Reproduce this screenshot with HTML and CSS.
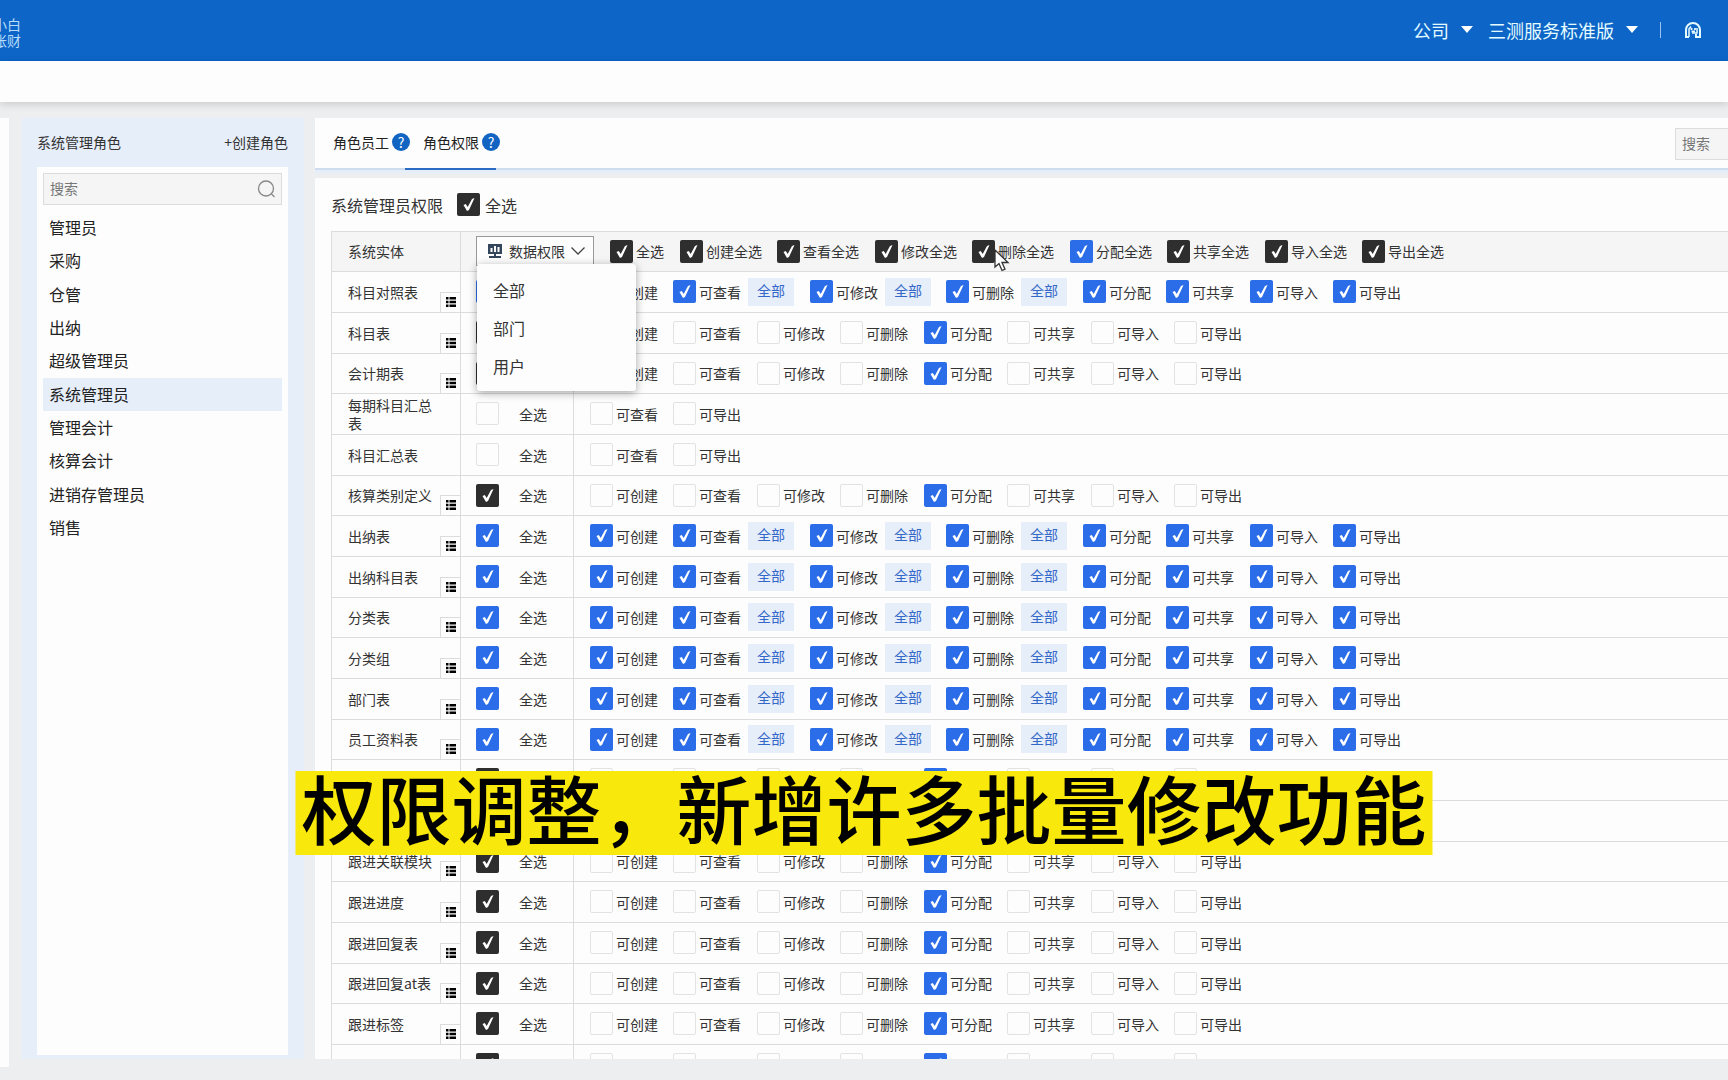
FILE: index.html
```html
<!DOCTYPE html>
<html lang="zh-CN">
<head>
<meta charset="utf-8">
<title>角色权限</title>
<link rel="stylesheet" href="styles.css">
</head>
<body>
<header class="topbar">
  <div class="logo">小白<br>账财</div>
  <nav class="account">
    <button class="account-menu" type="button">公司<span class="caret"></span></button>
    <button class="account-menu" type="button">三测服务标准版<span class="caret"></span></button>
    <span class="divider"></span>
    <button class="ghost" type="button" aria-label="助手">
      <svg width="18" height="18" viewBox="0 0 18 18" fill="none" stroke="#e4fbff"><path stroke-width="2" d="M5 16H2V9a7 7 0 0 1 14 0v7h-4v-3"/><path stroke-width="1.500" d="M5 16V8l2-2.500M13 7v5H8"/><path stroke-width="1.800" d="M7.500 7v2M11 7v2M7.500 10.500H11"/></svg>
    </button>
  </nav>
</header>
<div class="subbar"></div>
<div class="workspace">
  <div class="strip"></div>
  <aside class="sidebar">
    <div class="sidebar-head"><span>系统管理角色</span><a href="#">+创建角色</a></div>
    <div class="sidebar-body">
      <div class="search">
        <input type="text" placeholder="搜索" aria-label="搜索角色">
        <svg width="20" height="20" viewBox="0 0 20 20" fill="none" stroke="#888" stroke-width="1.3"><circle cx="10" cy="9.500" r="7.5"/><path d="M15.500 15l3 3"/></svg>
      </div>
      <ul class="roles">
        <li><a href="#">管理员</a></li>
        <li><a href="#">采购</a></li>
        <li><a href="#">仓管</a></li>
        <li><a href="#">出纳</a></li>
        <li><a href="#">超级管理员</a></li>
        <li class="active"><a href="#">系统管理员</a></li>
        <li><a href="#">管理会计</a></li>
        <li><a href="#">核算会计</a></li>
        <li><a href="#">进销存管理员</a></li>
        <li><a href="#">销售</a></li>
      </ul>
    </div>
  </aside>
  <main class="main">
    <div class="tabs">
      <a class="tab" href="#">角色员工<span class="help">?</span></a>
      <a class="tab current" href="#">角色权限<span class="help">?</span></a>
      <div class="tab-search"><input type="text" placeholder="搜索" aria-label="搜索权限"></div>
    </div>
    <section class="panel">
      <div class="panel-head">
        <h1>系统管理员权限</h1>
        <label class="check large"><input class="dark" type="checkbox" checked>全选</label>
      </div>
      <table class="grid">
        <colgroup><col class="col-name"><col class="col-all"><col></colgroup>
        <thead>
          <tr>
            <th scope="col">系统实体</th>
            <th scope="col" colspan="2">
              <div class="bulk">
                <div class="scope">
                  <button class="scope-button" type="button">
                    <svg width="16" height="14" viewBox="0 0 16 14"><path fill="#34465c" d="M1 0h14v10H1z"/><path stroke="#fff" stroke-width="2" d="M4.500 4v4M8 2v6M11.500 3v5"/><path fill="#34465c" d="M7 10h2v2h5v2H2v-2h5z"/></svg>
                    数据权限
                    <svg width="14" height="8" viewBox="0 0 14 8" fill="none" stroke="#444" stroke-width="1.3"><path d="M.5.500L7 7l6.500-6.500"/></svg>
                  </button>
                  <ul class="scope-menu"><li>全部</li><li>部门</li><li>用户</li></ul>
                </div>
                <label class="check"><input class="dark" type="checkbox" checked>全选</label>
                <div class="checks">
                  <label class="check"><input class="dark" type="checkbox" checked>创建全选</label>
                  <label class="check"><input class="dark" type="checkbox" checked>查看全选</label>
                  <label class="check"><input class="dark" type="checkbox" checked>修改全选</label>
                  <label class="check hovered"><input class="dark" type="checkbox" checked>删除全选
                    <svg class="cursor" width="16" height="24" viewBox="0 0 16 24"><path fill="#fff" stroke="#333" stroke-width="1.300" d="M1 1v17l4-3.500 3 7 3-1.300-3-6.700h6z"/></svg>
                  </label>
                  <label class="check"><input type="checkbox" checked>分配全选</label>
                  <label class="check"><input class="dark" type="checkbox" checked>共享全选</label>
                  <label class="check"><input class="dark" type="checkbox" checked>导入全选</label>
                  <label class="check"><input class="dark" type="checkbox" checked>导出全选</label>
                </div>
              </div>
            </th>
          </tr>
        </thead>
        <tbody id="rows"></tbody>
      </table>
    </section>
  </main>
</div>
<p class="caption">权限调整，新增许多批量修改功能</p>
<script src="app.js"></script>
</body>
</html>
```
FILE: styles.css
```css
* { box-sizing: border-box; }

body {
  margin: 0;
  height: 100vh;
  overflow: hidden;
  display: flex;
  flex-direction: column;
  background: #eceef0;
  color: #333;
  font: 14px/18px "Noto Sans CJK SC", "Liberation Sans", sans-serif;
}

button, input { font: inherit; color: inherit; }
a { color: inherit; text-decoration: none; }
ul { list-style: none; margin: 0; padding: 0; }

.topbar {
  flex: none;
  height: 61px;
  display: flex;
  align-items: center;
  justify-content: space-between;
  padding: 0 26px 2px 0;
  background: #0c65c7;
  color: #e4fbff;
}
.logo { margin-left: -7px; padding-top: 4px; line-height: 16px; color: #b8dcfa; }
.account { display: flex; align-items: center; }
.account-menu {
  display: flex;
  align-items: center;
  gap: 12px;
  margin-right: 15px;
  padding: 0;
  border: 0;
  background: none;
  font-size: 18px;
  line-height: 24px;
}
.caret { border: 6px solid transparent; border-top: 7px solid #fff; border-bottom: 0; }
.divider { width: 1px; height: 16px; margin: 0 23px 0 7px; background: #9cc4ee; }
.ghost { display: flex; padding: 0; border: 0; background: none; }

.subbar {
  flex: none;
  height: 41px;
  background: #fdfdfd;
  box-shadow: 0 2px 8px #00000029;
  z-index: 1;
}

.workspace { flex: 1; min-height: 0; display: flex; padding-top: 16px; }
.strip { flex: none; width: 9px; margin-bottom: 13px; background: #fdfdfd; }

.sidebar {
  flex: none;
  width: 282px;
  margin: 0 11px 21px 13px;
  padding: 0 16px 4px 15px;
  display: flex;
  flex-direction: column;
  background: #e6eefa;
}
.sidebar-head { display: flex; justify-content: space-between; padding: 15px 0 16px; }
.sidebar-body { flex: 1; padding: 6px; background: #fdfdfd; }
.search {
  display: flex;
  align-items: center;
  height: 32px;
  padding: 0 5px 0 6px;
  border: 1px solid #dcdcdc;
  background: #f5f5f5;
}
.search input { flex: 1; min-width: 0; padding: 0 0 2px; border: 0; background: none; }
input::placeholder { color: #777; opacity: 1; }
.roles { padding-top: 6px; font-size: 16px; color: #222; }
.roles li { height: 33px; padding: 0 6px; line-height: 33px; }
.roles li:nth-child(3n+2) { height: 34px; }
.roles .active { background: #e6eefa; }

.main { flex: 1; min-width: 0; margin-bottom: 21px; display: flex; flex-direction: column; }
.tabs {
  flex: none;
  display: flex;
  height: 52px;
  padding-left: 18px;
  background: #fdfdfd;
  border-bottom: 2px solid #cfdcef;
  box-shadow: 0 3px 0 #e6eefa;
}
.tab {
  display: flex;
  align-items: center;
  gap: 3px;
  height: 52px;
  margin-right: 13px;
  padding-bottom: 5px;
  color: #222;
}
.tab.current { position: relative; }
.tab.current::after {
  content: "";
  position: absolute;
  left: -18px;
  right: 4px;
  bottom: 0;
  height: 2px;
  background: #2a6cc4;
}
.help {
  width: 18px;
  height: 18px;
  border-radius: 50%;
  background: #1264c2;
  color: #fff;
  text-align: center;
}
.tab-search { width: 53px; margin: 10px 0 0 auto; overflow: hidden; }
.tab-search input {
  width: 240px;
  height: 32px;
  padding: 0 6px 2px;
  border: 1px solid #dcdcdc;
  background: #f5f5f5;
}

.panel { flex: 1; min-height: 0; margin-top: 8px; padding-left: 16px; overflow: hidden; background: #fdfdfd; }
.panel-head { display: flex; align-items: center; gap: 14px; height: 53px; }
.panel-head h1 { margin: 0; font-size: 16px; font-weight: 400; line-height: 20px; }

.check { display: flex; align-items: center; gap: 3px; white-space: nowrap; }
.check.large { gap: 5px; font-size: 16px; }
input[type="checkbox"] {
  appearance: none;
  flex: none;
  width: 23px;
  height: 23px;
  margin: 0;
  border: 1px solid #e2e2e2;
  border-radius: 2px;
  background: #fdfdfd;
}
input[type="checkbox"]:checked {
  border: 0;
  background: #2b6de9 url("data:image/svg+xml,%3Csvg xmlns='http://www.w3.org/2000/svg' viewBox='0 0 23 23'%3E%3Cpath fill='%23fff' d='M6.500 12l2.300-1 1.900 3L15 6l2.500-1L12 17l-2 1z'/%3E%3C/svg%3E") center / 23px;
}
input[type="checkbox"].dark:checked { background-color: #2e2e2e; }

.grid { width: 100%; table-layout: fixed; border-collapse: separate; border-spacing: 0; border-left: 1px solid #dcdcdc; }
.col-name { width: 129px; }
.col-all { width: 113px; }
.grid th, .grid td {
  height: 41px;
  padding: 0 0 1px 16px;
  border-bottom: 1px solid #dcdcdc;
  text-align: left;
  font-weight: 400;
}
.grid tbody tr:nth-child(3n) > * { height: 40px; }
.grid thead th { border-top: 1px solid #dcdcdc; background: #f5f5f5; }
.grid th:first-child, .grid td:nth-child(2) { border-right: 1px solid #dcdcdc; }
.grid th:nth-child(2), .grid td:nth-child(2) { padding-left: 15px; }
.grid td:nth-child(2) .check { gap: 20px; }
.grid tbody th { position: relative; padding-right: 24px; }

.bulk { display: flex; align-items: center; gap: 16px; }
.scope { position: relative; }
.scope-button {
  display: flex;
  align-items: center;
  justify-content: space-between;
  width: 118px;
  height: 30px;
  padding: 0 8px 0 10px;
  border: 1px solid #999;
  background: #fdfdfd;
}
.scope-menu {
  position: absolute;
  z-index: 2;
  top: 28px;
  left: 1px;
  width: 159px;
  padding: 7px 16px 6px;
  border-radius: 3px;
  background: #fdfdfd;
  box-shadow: 0 2px 8px #00000059;
  font-size: 16px;
  line-height: 38px;
}

.checks { display: flex; align-items: center; }
.checks > :nth-child(odd) { margin-right: 15px; }
.checks > :nth-child(even) { margin-right: 16px; }
.perm { display: flex; align-items: center; gap: 7px; }
.range {
  width: 46px;
  height: 28px;
  padding: 0 0 3px;
  border: 0;
  background: #e6eefa;
  color: #3468c8;
}
.fields {
  position: absolute;
  right: 0;
  bottom: 0;
  display: flex;
  align-items: center;
  justify-content: center;
  width: 20px;
  height: 20px;
  padding: 0 0 1px;
  border: solid #dcdcdc;
  border-width: 1px 0 0 1px;
  background: #fdfdfd;
}
.hovered { position: relative; }
.cursor { position: absolute; left: 22px; top: 9px; }

.caption {
  position: absolute;
  z-index: 3;
  left: 50%;
  top: 771px;
  transform: translateX(-50%);
  margin: 0;
  padding: 0 6px 12px;
  background: #f8e80b;
  color: #000;
  font-size: 75px;
  font-weight: 500;
  line-height: 72px;
  white-space: nowrap;
}
```
FILE: app.js
```js
const ACTIONS = ["可创建", "可查看", "可修改", "可删除", "可分配", "可共享", "可导入", "可导出"];
const RANGED = ["可查看", "可修改", "可删除"];

// kind: full = everything granted, part = only assignment granted, report = read-only entity
const ENTITIES = [
  ["科目对照表", "full"], ["科目表", "part"], ["会计期表", "part"],
  ["每期科目汇总表", "report"], ["科目汇总表", "report"], ["核算类别定义", "part"],
  ["出纳表", "full"], ["出纳科目表", "full"], ["分类表", "full"],
  ["分类组", "full"], ["部门表", "full"], ["员工资料表", "full"],
  ["", "part"], ["", "part"], ["跟进关联模块", "part"],
  ["跟进进度", "part"], ["跟进回复表", "part"], ["跟进回复at表", "part"],
  ["跟进标签", "part"], ["", "part"],
];

const FIELDS_BUTTON = `<button class="fields" type="button" aria-label="字段">
  <svg width="10" height="10" viewBox="0 0 10 10"><path d="M0 0h2.500v2.500H0zM3.500 0H10v2.500H3.500zM0 3.700h2.500v2.500H0zM3.500 3.700H10v2.500H3.500zM0 7.500h2.500V10H0zM3.500 7.500H10V10H3.500z"/></svg>
</button>`;

const check = (text, on, dark) =>
  `<label class="check"><input type="checkbox"${dark ? ' class="dark"' : ""}${on ? " checked" : ""}>${text}</label>`;

function perm(action, kind) {
  const on = kind === "full" || (kind === "part" && action === "可分配");
  const range = kind === "full" && RANGED.includes(action)
    ? '<button class="range" type="button">全部</button>' : "";
  return `<div class="perm">${check(action, on)}${range}</div>`;
}

document.getElementById("rows").innerHTML = ENTITIES.map(([name, kind]) => {
  const actions = kind === "report" ? ["可查看", "可导出"] : ACTIONS;
  return `<tr>
    <th scope="row">${name}${kind === "report" ? "" : FIELDS_BUTTON}</th>
    <td>${check("全选", kind !== "report", kind === "part")}</td>
    <td><div class="checks">${actions.map(a => perm(a, kind)).join("")}</div></td>
  </tr>`;
}).join("");
```
